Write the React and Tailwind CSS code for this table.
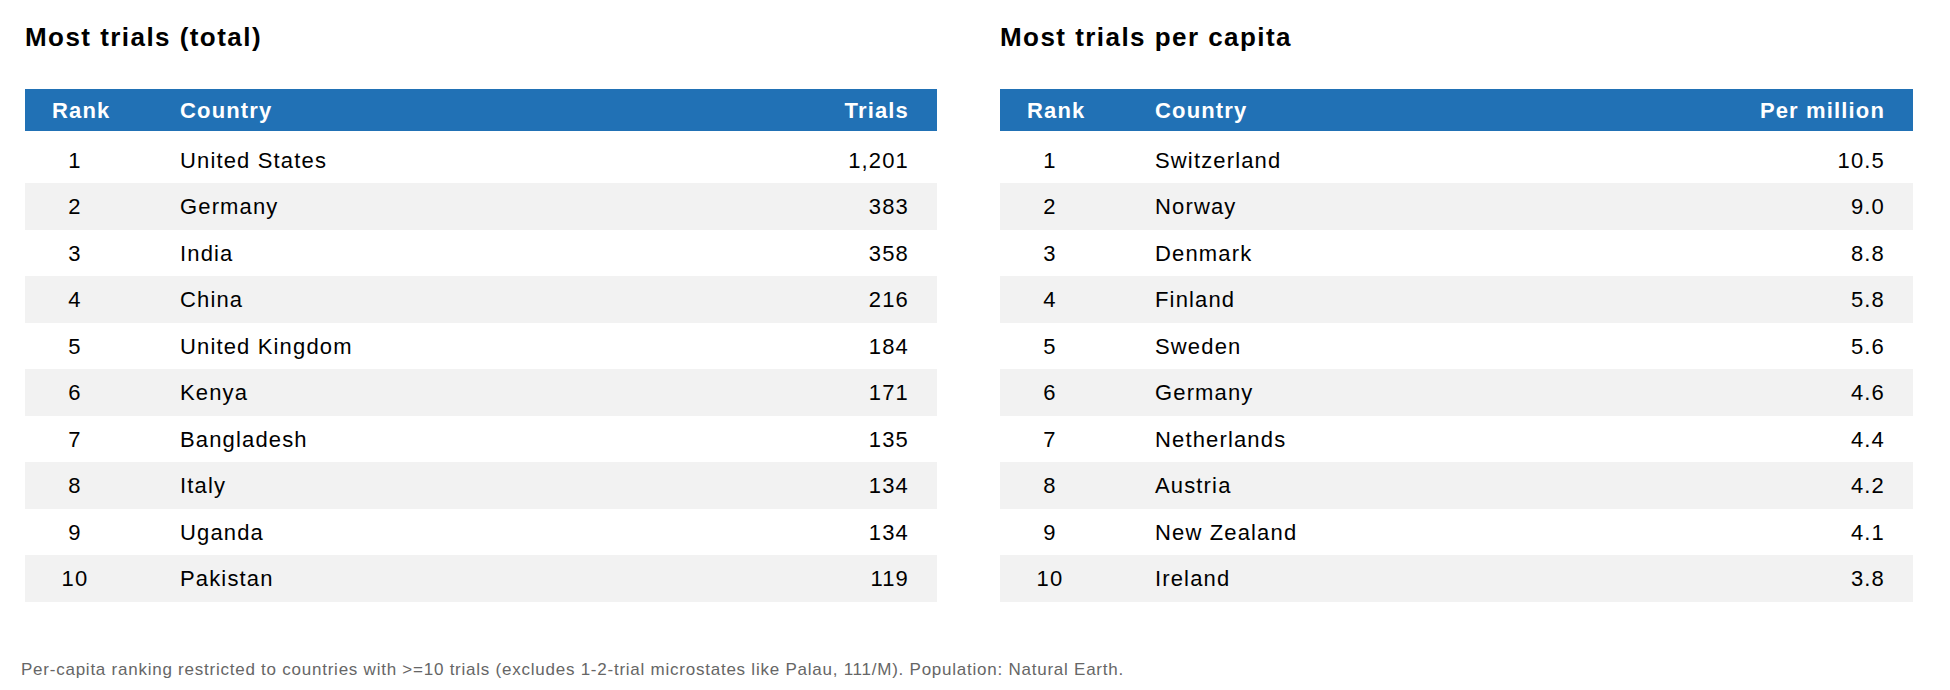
const totals = [
  { rank: 1, country: "United States", value: "1,201" },
  { rank: 2, country: "Germany", value: "383" },
  { rank: 3, country: "India", value: "358" },
  { rank: 4, country: "China", value: "216" },
  { rank: 5, country: "United Kingdom", value: "184" },
  { rank: 6, country: "Kenya", value: "171" },
  { rank: 7, country: "Bangladesh", value: "135" },
  { rank: 8, country: "Italy", value: "134" },
  { rank: 9, country: "Uganda", value: "134" },
  { rank: 10, country: "Pakistan", value: "119" },
];

const perCapita = [
  { rank: 1, country: "Switzerland", value: "10.5" },
  { rank: 2, country: "Norway", value: "9.0" },
  { rank: 3, country: "Denmark", value: "8.8" },
  { rank: 4, country: "Finland", value: "5.8" },
  { rank: 5, country: "Sweden", value: "5.6" },
  { rank: 6, country: "Germany", value: "4.6" },
  { rank: 7, country: "Netherlands", value: "4.4" },
  { rank: 8, country: "Austria", value: "4.2" },
  { rank: 9, country: "New Zealand", value: "4.1" },
  { rank: 10, country: "Ireland", value: "3.8" },
];

function RankTable({ title, valueLabel, rows }) {
  return (
    <div className="flex flex-col">
      <h2 className="h-[26px] text-[26px] leading-[26px] font-bold tracking-[1.45px] text-black">
        {title}
      </h2>

      <div className="mt-[39px] flex flex-col text-[22px] leading-none tracking-[1.15px]">
        {/* header */}
        <div className="flex h-[42px] items-center bg-[#2171b5] pt-[2px] font-bold text-white">
          <div className="w-[155px] shrink-0 pl-[27px]">Rank</div>
          <div className="flex-1">Country</div>
          <div className="pr-[28px] text-right">{valueLabel}</div>
        </div>

        <div className="flex flex-col pt-[5.5px] text-black">
          {rows.map((r, i) => (
            <div
              key={r.rank}
              className={
                "flex h-[46.5px] items-center pt-[2px] " +
                (i % 2 === 1 ? "bg-[#f2f2f2]" : "bg-white")
              }
            >
              <div className="w-[155px] shrink-0 pl-[27px]">
                <span className="inline-block w-[46px] text-center">{r.rank}</span>
              </div>
              <div className="flex-1">{r.country}</div>
              <div className="pr-[28px] text-right">{r.value}</div>
            </div>
          ))}
        </div>
      </div>
    </div>
  );
}

export default function App() {
  return (
    <div
      className="h-[690px] w-[1950px] overflow-hidden bg-white"
      style={{ fontFamily: '"Liberation Sans", Arial, sans-serif' }}
    >
      <div className="grid grid-cols-[912px_913px] gap-x-[63px] pl-[25px] pt-[24px]">
        <RankTable title="Most trials (total)" valueLabel="Trials" rows={totals} />
        <RankTable title="Most trials per capita" valueLabel="Per million" rows={perCapita} />
      </div>

      <p className="mt-[59px] pl-[21px] text-[17px] leading-none tracking-[0.76px] text-[#666]">
        Per-capita ranking restricted to countries with &gt;=10 trials (excludes 1-2-trial microstates like Palau, 111/M). Population: Natural Earth.
      </p>
    </div>
  );
}
